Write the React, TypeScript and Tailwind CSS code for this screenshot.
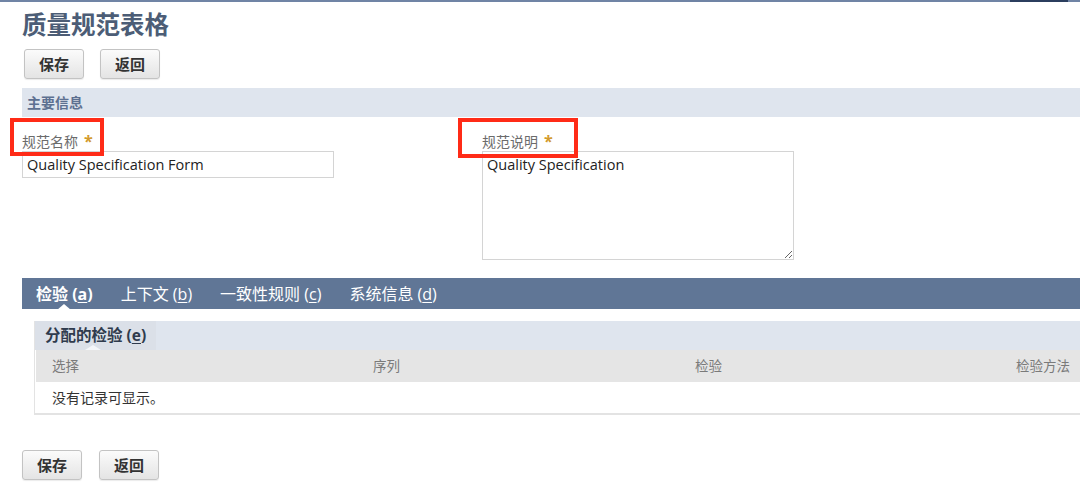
import type { ReactNode } from "react";

const FONT = { fontFamily: '"Open Sans", "Noto Sans CJK SC", sans-serif' };

function Btn({ children }: { children: ReactNode }) {
  return (
    <button className="h-[30px] w-[60px] rounded-[3px] border border-[#c3c3c3] bg-gradient-to-b from-[#fbfbfb] to-[#e4e4e4] text-[15px] font-bold text-[#333] shadow-[0_1px_1px_rgba(0,0,0,0.08)]">
      {children}
    </button>
  );
}

function Hot({ label, k }: { label: string; k: string }) {
  return (
    <>
      {label} (<span className="underline underline-offset-2">{k}</span>)
    </>
  );
}

export default function App() {
  const tabs = [
    { label: "检验", k: "a" },
    { label: "上下文", k: "b" },
    { label: "一致性规则", k: "c" },
    { label: "系统信息", k: "d" },
  ];

  return (
    <div className="relative h-[488px] w-[1080px] overflow-hidden bg-white" style={FONT}>
      {/* top strip */}
      <div className="flex h-[2px]">
        <div className="flex-1 bg-[#7084a5]" />
        <div className="w-[58px] bg-[#2b3e5e]" />
        <div className="w-[12px] bg-[#7084a5]" />
      </div>

      <div className="pl-[22px]">
        <h1 className="mt-[7px] text-[24.5px] font-bold leading-[32px] text-[#4c5d76]">质量规范表格</h1>

        <div className="mt-[8px] flex gap-[16px] pl-[2px]">
          <Btn>保存</Btn>
          <Btn>返回</Btn>
        </div>

        <div className="mt-[9px] flex h-[29px] items-center bg-[#dfe5ee] pl-[5px] text-[14px] font-bold text-[#5d7091]">
          主要信息
        </div>

        <div className="flex pt-[15px]">
          <div className="w-[460px]">
            <div className="flex h-[18px] items-center text-[14px] text-[#6b6b6b]">
              规范名称 <span className="ml-[6px] text-[16px] font-bold text-[#d39a2c]">*</span>
            </div>
            <input
              readOnly
              defaultValue="Quality Specification Form"
              className="mt-[1px] h-[27px] w-[312px] border border-[#d4d4d4] px-[4px] text-[14.5px] text-[#222] outline-none"
              style={FONT}
            />
          </div>
          <div>
            <div className="flex h-[18px] items-center text-[14px] text-[#6b6b6b]">
              规范说明 <span className="ml-[6px] text-[16px] font-bold text-[#d39a2c]">*</span>
            </div>
            <textarea
              readOnly
              defaultValue="Quality Specification"
              className="mt-[1px] block h-[109px] w-[312px] border border-[#d4d4d4] px-[4px] py-[2px] text-[14.5px] leading-[22px] text-[#222] outline-none"
              style={FONT}
            />
          </div>
        </div>

        {/* tab bar */}
        <div className="relative mt-[18px] flex h-[31px] items-center gap-[28px] bg-[#607696] pl-[14px] text-[16px] text-white">
          {tabs.map((t, i) => (
            <span key={t.k} className={i === 0 ? "relative font-bold" : ""}>
              <Hot label={t.label} k={t.k} />
              {i === 0 && (
                <span className="absolute left-[21px] top-[22px] h-0 w-0 border-x-[7px] border-b-[6px] border-x-transparent border-b-white" />
              )}
            </span>
          ))}
        </div>

        {/* sub panel */}
        <div className="ml-[12px] mt-[12px] border-b-2 border-l border-[#e3e3e3]">
          <div className="flex h-[29px] bg-[#dfe5ee]">
            <div className="relative flex items-center bg-[#dbe0e8] px-[10px] text-[15.5px] font-bold text-[#2f3b4d]">
              <Hot label="分配的检验" k="e" />
              <span className="absolute left-[50px] top-[24px] h-0 w-0 border-x-[8px] border-b-[5px] border-x-transparent border-b-[#f4f6f9]" />
            </div>
          </div>
          <div className="ml-[1px] grid h-[32px] grid-cols-[321px_322px_1fr_auto] items-center bg-[#e5e5e5] pl-[16px] pr-[10px] text-[13.5px] text-[#7a7a7a]">
            <span>选择</span>
            <span>序列</span>
            <span>检验</span>
            <span>检验方法</span>
          </div>
          <div className="flex h-[31px] items-center pl-[17px] text-[14px] text-[#333]">没有记录可显示。</div>
        </div>

        <div className="mt-[35px] flex gap-[17px]">
          <Btn>保存</Btn>
          <Btn>返回</Btn>
        </div>
      </div>

      {/* annotation boxes */}
      <div className="absolute left-[10px] top-[118px] h-[38px] w-[94px] border-[4px] border-[#ff2b17]" />
      <div className="absolute left-[458px] top-[118px] h-[40px] w-[120px] border-[4px] border-[#ff2b17]" />
    </div>
  );
}
